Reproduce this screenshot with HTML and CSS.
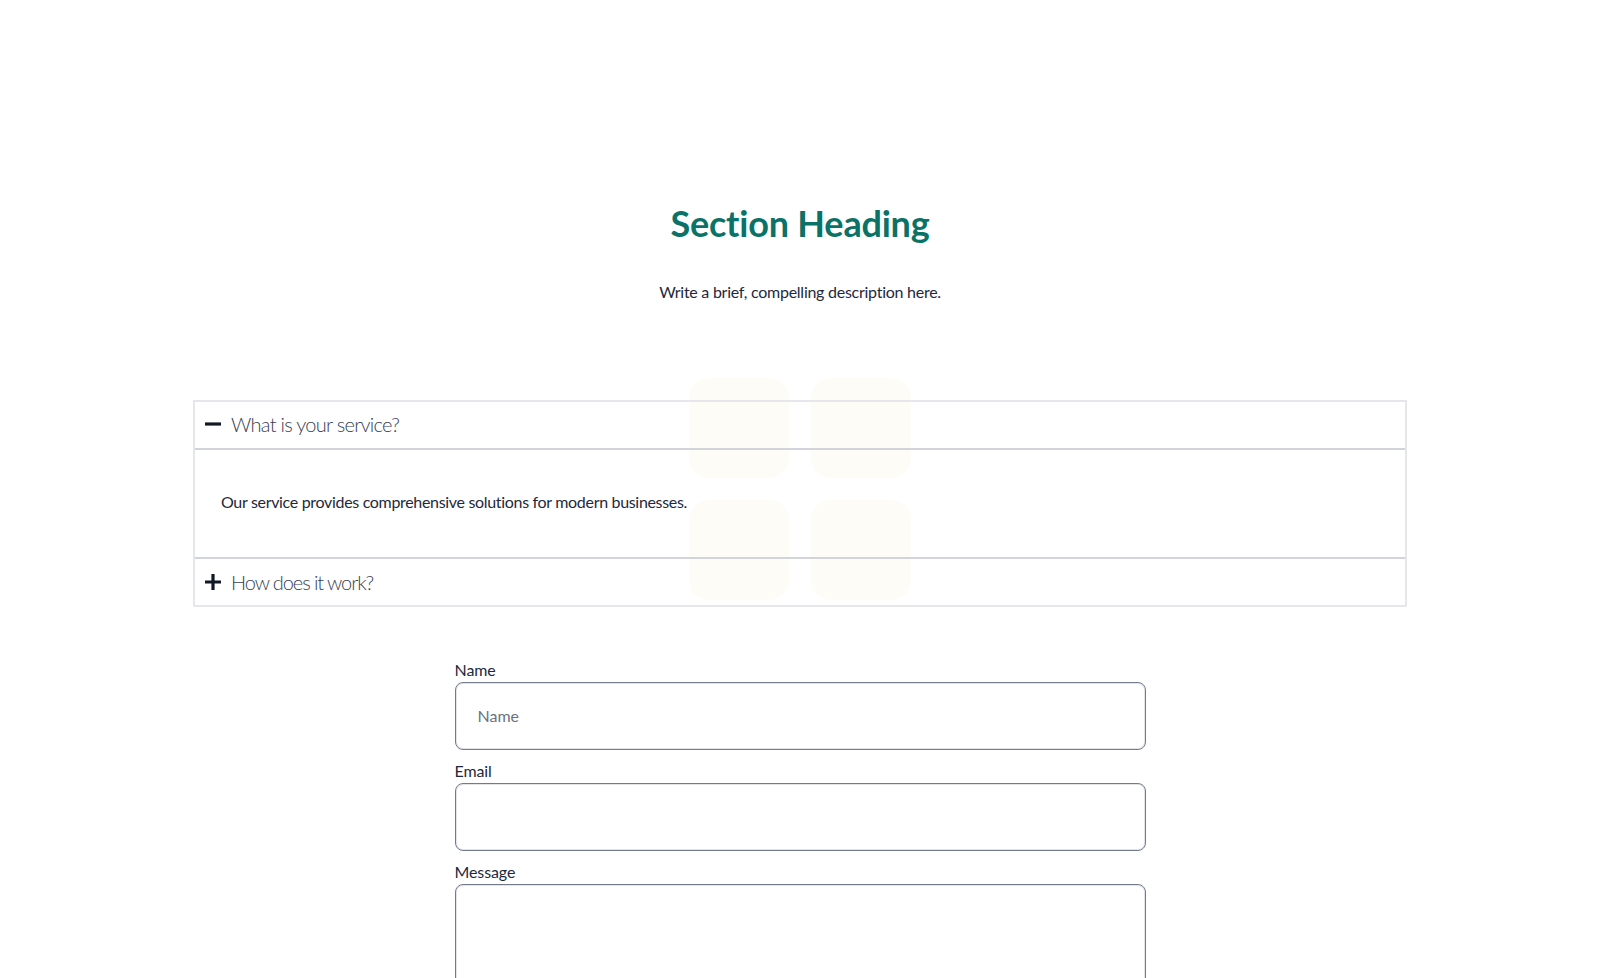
FILE: index.html
```html
<!DOCTYPE html>
<html lang="en">
<head>
<meta charset="utf-8">
<title>Section Heading</title>
<link rel="stylesheet" href="styles.css">
</head>
<body>
<main class="page">
  <header class="intro">
    <h1 class="heading">Section Heading</h1>
    <p class="lead">Write a brief, compelling description here.</p>
  </header>
  <section class="faq-wrap">
    <div class="tiles" aria-hidden="true">
      <span class="tile"></span><span class="tile"></span><span class="tile"></span><span class="tile"></span>
    </div>
    <div class="faq">
      <div class="faq-head">
        <svg class="faq-icon" viewBox="0 0 16 16"><path d="M0 8h16" /></svg>
        <span class="faq-title">What is your service?</span>
      </div>
      <div class="faq-body">Our service provides comprehensive solutions for modern businesses.</div>
      <div class="faq-head faq-head-last">
        <svg class="faq-icon" viewBox="0 0 16 16"><path d="M0 8h16M8 0v16" /></svg>
        <span class="faq-title faq-title-tight">How does it work?</span>
      </div>
    </div>
  </section>
  <form class="form">
    <label class="field"><span class="label">Name</span><input class="input" type="text" placeholder="Name"></label>
    <label class="field"><span class="label">Email</span><input class="input" type="email"></label>
    <label class="field"><span class="label">Message</span><textarea class="input area"></textarea></label>
  </form>
</main>
</body>
</html>
```

FILE: styles.css
```css
* { box-sizing: border-box; }
html, body { margin: 0; height: 978px; overflow: hidden; background: #fff; }
body { font-family: "Lato", "Noto Sans", sans-serif; color: #1e293b; font-variant-ligatures: none; }
.page { height: 978px; overflow: hidden; display: flex; flex-direction: column; align-items: center; padding-top: 200px; }
.intro { text-align: center; display: flex; flex-direction: column; align-items: center; }
.heading { margin: 0; font-size: 36px; line-height: 46px; font-weight: 700; color: #0b7268; letter-spacing: -0.2px; }
.lead { margin: 34px 0 0; font-size: 16px; line-height: 24px; letter-spacing: -0.26px; }
.faq-wrap { position: relative; width: 1214px; margin-top: 96px; flex: none; }
.tiles { position: absolute; left: 496px; top: -22px; display: grid; grid-template-columns: 100px 100px; gap: 22px; }
.tile { width: 100px; height: 100px; border-radius: 20px; background: #fdfcf7; }
.faq { position: relative; border: 2px solid #e5e7eb; }
.faq-head { display: flex; align-items: center; gap: 10px; height: 48px; padding: 0 0 2px 10px; border-bottom: 2px solid #d1d5db; }
.faq-head-last { border-bottom: 0; height: 46px; padding-bottom: 0; }
.faq-icon { width: 16px; height: 16px; fill: none; stroke: #111827; stroke-width: 3.2; }
.faq-title { font-size: 20px; font-weight: 300; color: #374151; letter-spacing: -0.72px; }
.faq-title-tight { letter-spacing: -1.08px; }
.faq-body { display: flex; align-items: center; height: 109px; padding: 0 0 4px 26px; font-size: 16px; letter-spacing: -0.32px; border-bottom: 2px solid #d1d5db; }
.form { width: 691px; margin-top: 51px; display: flex; flex-direction: column; gap: 9px; flex: none; }
.field { display: flex; flex-direction: column; }
.label { font-size: 16px; line-height: 24px; height: 24px; letter-spacing: -0.1px; }
.input { display: block; width: 100%; height: 68px; padding: 0 22px 2px; font: inherit; font-size: 16px; border: 1px solid #727a8c; box-shadow: inset 0 0 0 1px rgba(160, 165, 176, 0.3); border-radius: 8px; background: #fff; color: #1e293b; outline: 0; resize: none; }
.input::placeholder { color: #6b7280; opacity: 1; }
.area { height: 160px; }
```
